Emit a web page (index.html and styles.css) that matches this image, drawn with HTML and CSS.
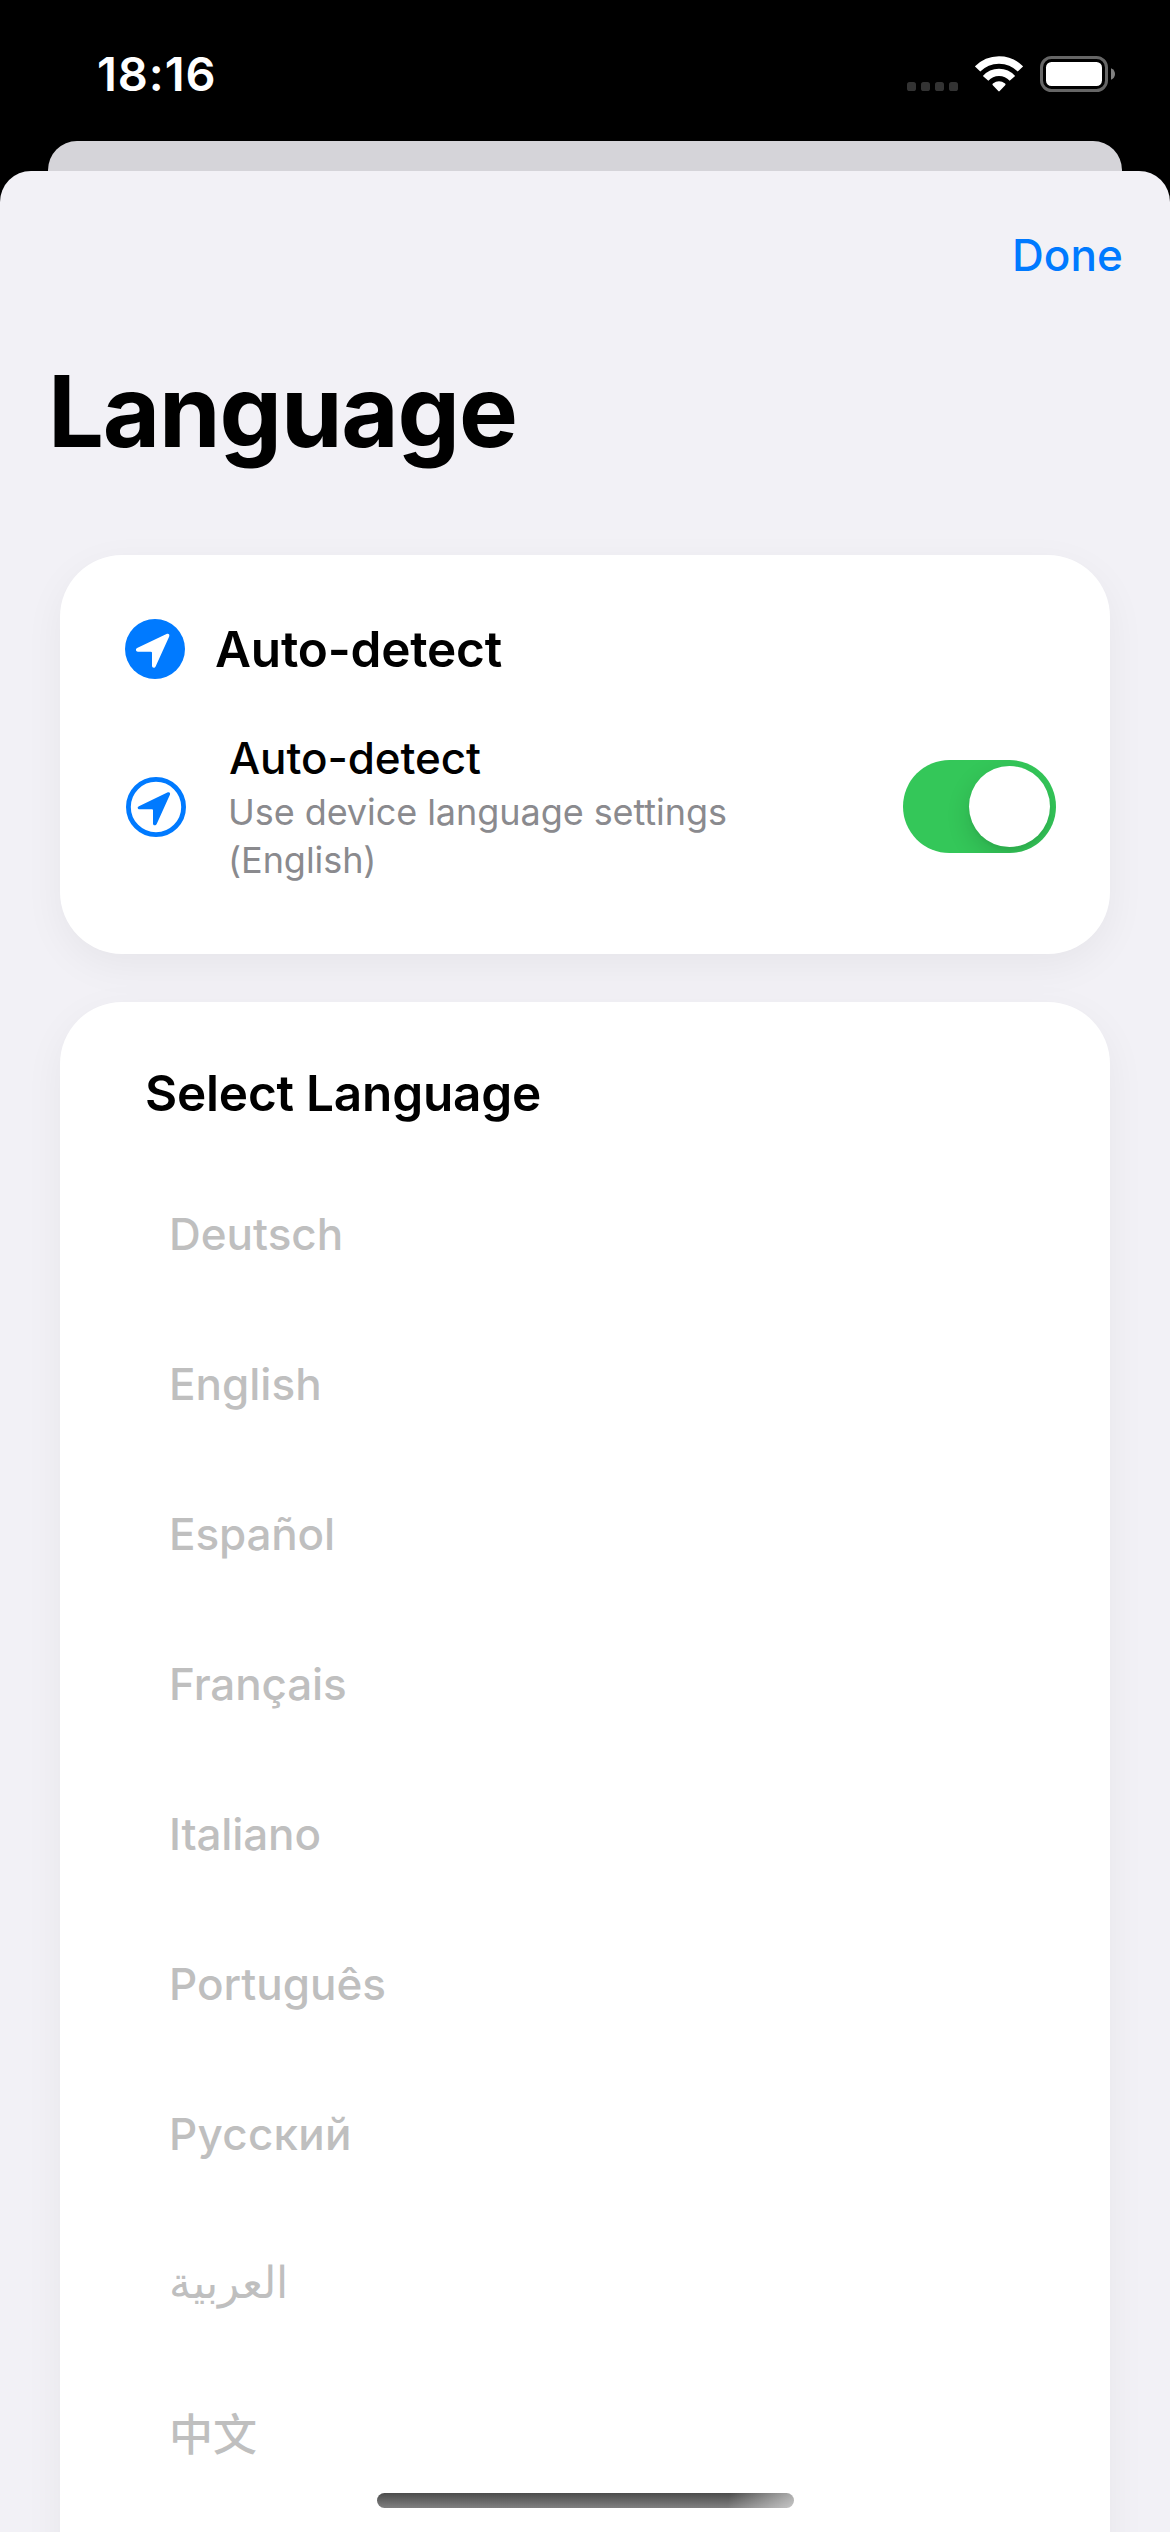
FILE: index.html
```
<!DOCTYPE html>
<html lang="en">
<head>
<meta charset="utf-8">
<title>Language</title>
<link rel="stylesheet" href="styles.css">
</head>
<body>
<div class="screen">
  <header class="status-bar">
    <span class="time">18:16</span>
    <div class="status-icons">
      <svg class="cellular" width="51" height="36" viewBox="0 0 51 36" fill="#333">
        <rect x="0" y="26" width="9" height="9" rx="2.6"/>
        <rect x="14" y="26" width="9" height="9" rx="2.6"/>
        <rect x="28" y="26" width="9" height="9" rx="2.6"/>
        <rect x="42" y="26" width="9" height="9" rx="2.6"/>
      </svg>
      <svg class="wifi" width="48" height="38" viewBox="0 0 48 38">
        <g fill="none" stroke="#fff" stroke-width="7.4" stroke-linejoin="round">
          <path d="M2.6 14A29.8 29.8 0 0 1 45.4 14"/>
          <path d="M10.6 23.4A18 18 0 0 1 37.4 23.4"/>
        </g>
        <path fill="#fff" d="M17.8 30.2Q16.9 29.3 17.9 28.6Q24 23.9 30.1 28.6Q31.1 29.3 30.2 30.2L24.7 36.1Q24 36.8 23.3 36.1Z"/>
      </svg>
      <svg class="battery" width="76" height="36" viewBox="0 0 76 36">
        <rect x="1.5" y="1.5" width="65" height="33" rx="10" fill="none" stroke="#666" stroke-width="3"/>
        <rect x="6" y="6" width="56" height="24" rx="5.5" fill="#fff"/>
        <path d="M71 12.2Q75 14 75 18T71 23.8Z" fill="#808080"/>
      </svg>
    </div>
  </header>
  <div class="back-card"></div>
  <main class="sheet">
    <nav class="nav"><a class="done">Done</a></nav>
    <h1 class="title">Language</h1>
    <section class="card auto-card">
      <div class="card-head">
        <svg width="60" height="60" viewBox="0 0 60 60">
          <circle cx="30" cy="30" r="30" fill="#007aff"/>
          <path class="arrow-light" d="M12.1 29.1L41.5 15.1C43.6 14.2 45 15.7 44.1 17.8L30.6 47.4C29.7 49.4 27 49 27 46.8V33.8Q27 32.7 25.9 32.7H12.9C10.8 32.7 10.2 30 12.1 29.1Z"/>
        </svg>
        <h2 class="heading">Auto-detect</h2>
      </div>
      <div class="setting">
        <svg class="setting-icon" width="60" height="60" viewBox="0 0 60 60">
          <circle cx="30" cy="30" r="27.6" fill="none" stroke="#007aff" stroke-width="4.8"/>
          <path class="arrow-blue" d="M12.9 29.3L41.3 15.6C43.4 14.7 44.7 16 43.8 18.1L30.7 47C29.8 48.9 27 48.6 27 46.4V33.3Q27 32.3 26 32.3H13.7C11.5 32.3 11 30.2 12.9 29.3Z"/>
        </svg>
        <div class="setting-text">
          <div class="setting-title">Auto-detect</div>
          <div class="setting-sub">Use device language settings<br>(English)</div>
        </div>
        <div class="toggle"><div class="knob"></div></div>
      </div>
    </section>
    <section class="card list-card">
      <h2 class="heading">Select Language</h2>
      <ul class="languages">
        <li>Deutsch</li>
        <li>English</li>
        <li class="tight">Español</li>
        <li class="tight">Français</li>
        <li class="tight">Italiano</li>
        <li>Português</li>
        <li class="cyrillic">Русский</li>
        <li class="arabic" lang="ar">العربية</li>
        <li class="chinese" lang="zh">中文</li>
      </ul>
    </section>
  </main>
  <div class="home-indicator"></div>
</div>
</body>
</html>
```
FILE: styles.css
```
* { box-sizing: border-box; margin: 0; padding: 0; }

body {
  background: #000;
  font-family: Inter, "Noto Sans", "Noto Sans CJK SC", sans-serif;
  color: #000;
}

svg { display: block; flex: none; }

.screen {
  position: relative;
  display: flex;
  flex-direction: column;
  width: 1170px;
  height: 2532px;
  overflow: hidden;
  background: #000;
}

.status-bar {
  display: flex;
  flex: none;
  align-items: center;
  justify-content: space-between;
  height: 141px;
  padding: 7px 54px 0 97px;
}

.time {
  color: #fff;
  font-size: 47px;
  font-weight: 600;
  line-height: 56px;
  letter-spacing: 0.9px;
}

.status-icons { display: flex; height: 36px; }
.wifi { margin: -1px 17px 0; }

.back-card {
  flex: none;
  height: 30px;
  margin: 0 48px;
  border-radius: 29px 29px 0 0;
  background: #d5d4d9;
}

.sheet {
  flex: 1;
  min-height: 0;
  overflow: hidden;
  border-radius: 31px 31px 0 0;
  background: #f2f1f6;
}

.nav {
  display: flex;
  align-items: center;
  justify-content: flex-end;
  height: 168px;
  padding-right: 47px;
}

.done { color: #007aff; font-size: 44px; font-weight: 450; line-height: 60px; letter-spacing: 0.1px; }

.title {
  margin: 12px 48px 84px;
  font-size: 99px;
  font-weight: 700;
  line-height: 120px;
  letter-spacing: -1.19px;
}

.card {
  margin: 0 60px 48px;
  border-radius: 62px;
  background: #fff;
  box-shadow: 0 12px 40px rgba(0, 0, 0, 0.05);
}

.auto-card { height: 399px; padding: 64px 54px 0 65px; }

.card-head { display: flex; align-items: center; gap: 30px; }

.heading {
  font-size: 49.5px;
  font-weight: 600;
  line-height: 60px;
  letter-spacing: -0.2px;
}

.setting { display: flex; align-items: center; margin-top: 52px; padding-left: 1px; }
.setting-icon { margin-top: -1px; }
.setting-text { flex: 1; padding-left: 43px; }

.setting-title {
  margin-bottom: 3px;
  font-size: 44px;
  font-weight: 500;
  line-height: 54px;
  letter-spacing: -0.1px;
}

.setting-sub { margin-left: -1px; color: #8a8a8e; font-size: 36px; line-height: 48px; letter-spacing: -0.06px; }

.toggle {
  display: flex;
  justify-content: flex-end;
  width: 153px;
  height: 93px;
  margin-top: -2px;
  padding: 6px;
  border-radius: 47px;
  overflow: hidden;
  background: #34c759;
}

.knob {
  width: 81px;
  height: 81px;
  border-radius: 50%;
  background: #fff;
  box-shadow: 0 9px 24px rgba(0, 0, 0, 0.14), 0 3px 3px rgba(0, 0, 0, 0.04);
}

.arrow-light { fill: #fff; }
.arrow-blue { fill: #007aff; }

.list-card { height: 1700px; padding: 61px 60px 0 85px; }

.languages {
  margin-top: 36px;
  padding-left: 24px;
  list-style: none;
  color: #bfbfbf;
  font-size: 44px;
  font-weight: 500;
}

.languages li { height: 150px; line-height: 150px; }
.languages .tight { letter-spacing: -0.15px; }
.languages .cyrillic { letter-spacing: 0.27px; }
.languages .arabic { line-height: 146px; }
.languages .chinese { line-height: 152px; }

.home-indicator {
  position: absolute;
  left: 377px;
  top: 2493px;
  width: 417px;
  height: 15px;
  border-radius: 8px;
  background:
    linear-gradient(100deg, rgba(255, 255, 255, 0) 84%, rgba(255, 255, 255, 0.55) 100%),
    linear-gradient(#4c4c4c, #808080);
}
```
